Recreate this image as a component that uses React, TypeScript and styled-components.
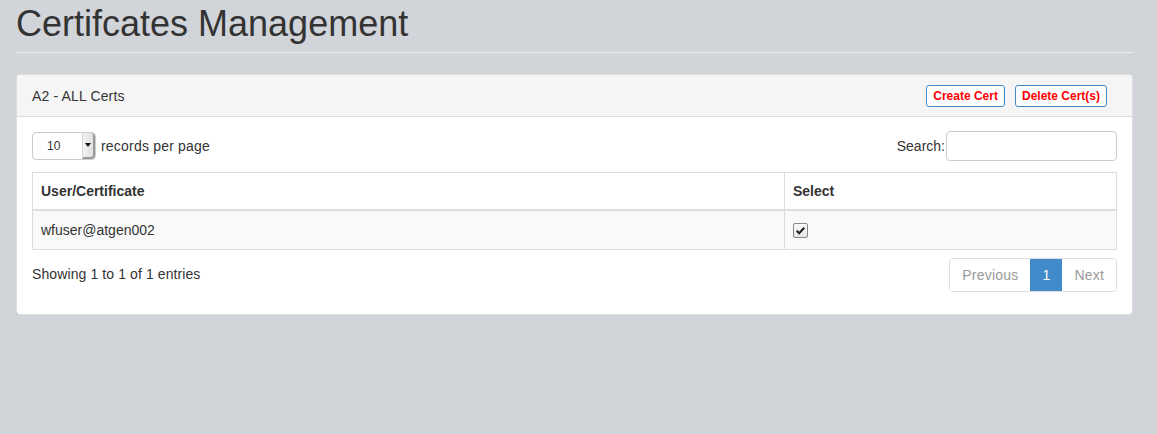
import React, {FC} from 'react';
import styled, {createGlobalStyle} from 'styled-components';

const GlobalStyle = createGlobalStyle`
  html, body {
    margin: 0;
    padding: 0;
    background: #d1d4d9;
    font-family: "Liberation Sans", Helvetica, Arial, sans-serif;
    font-size: 14px;
    color: #333;
  }
`;

const Page = styled.div`
  padding: 0 24px 0 16px;
`;

const Title = styled.h1`
  margin: 0;
  padding: 4px 0 8px;
  font-size: 36px;
  font-weight: 400;
  line-height: 40px;
  color: #333;
  border-bottom: 1px solid #eceef1;
`;

const Panel = styled.div`
  margin-top: 21px;
  background: #fff;
  border: 1px solid #dddddd;
  border-radius: 4px;
  box-shadow: 0 1px 1px rgba(0, 0, 0, 0.05);
`;

const PanelHeading = styled.div`
  display: flex;
  align-items: center;
  justify-content: space-between;
  height: 41px;
  padding: 0 25px 0 15px;
  background: #f5f5f5;
  border-bottom: 1px solid #dddddd;
  border-radius: 3px 3px 0 0;
  letter-spacing: 0.15px;
`;

const Actions = styled.div`
  display: flex;
  gap: 10px;
`;

const ActionButton = styled.button`
  font-family: "Liberation Sans", Arial, sans-serif;
  font-size: 12px;
  font-weight: 700;
  color: #ff0000;
  background: #fff;
  border: 1px solid #428bca;
  border-radius: 3px;
  height: 22px;
  padding: 0 6px;
`;

const PanelBody = styled.div`
  padding: 14px 15px 22px;
`;

const TopBar = styled.div`
  display: flex;
  align-items: center;
  justify-content: space-between;
  height: 30px;
  margin-bottom: 11px;
`;

const Length = styled.label`
  display: flex;
  align-items: center;
  gap: 5px;
  letter-spacing: 0.2px;
`;

const SelectBox = styled.div`
  position: relative;
  width: 64px;
  height: 28px;
  border: 1px solid #ccc;
  border-radius: 4px;
  background: #fff;
  font-size: 12px;
  letter-spacing: 0;
  display: flex;
  align-items: center;
  padding-left: 14px;
  box-sizing: border-box;
`;

const SelectArrow = styled.span`
  position: absolute;
  right: 0;
  top: 0;
  bottom: 0;
  width: 10px;
  background: linear-gradient(to right, #f2f2f2, #e0e0e0);
  border-left: 1px solid #d8d8d8;
  border-right: 2px solid #9a9a9a;
  border-bottom: 2px solid #9a9a9a;
  border-radius: 0 4px 4px 0;
  display: flex;
  align-items: center;
  justify-content: center;
  &::after {
    content: '';
    border-left: 3px solid transparent;
    border-right: 3px solid transparent;
    border-top: 4px solid #111;
  }
`;

const Search = styled.label`
  display: flex;
  align-items: center;
  gap: 1px;
`;

const SearchInput = styled.input`
  width: 171px;
  height: 30px;
  box-sizing: border-box;
  border: 1px solid #ccc;
  border-radius: 4px;
  padding: 4px 8px;
`;

const Table = styled.table`
  width: 100%;
  border-collapse: collapse;
  border: 1px solid #ddd;
`;

const Th = styled.th<{ $width?: number }>`
  text-align: left;
  font-weight: 700;
  padding: 8px;
  height: 37px;
  width: ${(p) => (p.$width ? `${p.$width}px` : 'auto')};
  box-sizing: border-box;
  border: 1px solid #ddd;
  border-bottom: 2px solid #ddd;
`;

const Td = styled.td<{ $striped?: boolean }>`
  padding: 8px;
  height: 40px;
  box-sizing: border-box;
  border: 1px solid #ddd;
  background: ${(p) => (p.$striped ? '#f9f9f9' : '#fff')};
`;

const Check = styled.span`
  display: inline-flex;
  align-items: center;
  justify-content: center;
  width: 13px;
  height: 13px;
  margin-top: 2px;
  border: 1px solid #888;
  border-radius: 2px;
  background: linear-gradient(#fafafa, #e6e6e6);
`;

const Footer = styled.div`
  display: flex;
  align-items: center;
  justify-content: space-between;
  margin-top: 8px;
`;

const Info = styled.span`
  letter-spacing: 0.1px;
  margin-top: -3px;
`;

const Pager = styled.div`
  display: flex;
  border: 1px solid #ddd;
  border-radius: 4px;
  overflow: hidden;
`;

const PageLink = styled.span<{ $active?: boolean }>`
  padding: 0 12px;
  height: 32px;
  line-height: 32px;
  letter-spacing: 0.2px;
  color: ${(p) => (p.$active ? '#fff' : '#999')};
  background: ${(p) => (p.$active ? '#428bca' : '#fff')};
`;

const App: FC = () => {
  return (
    <Page>
      <GlobalStyle />
      <Title>Certifcates Management</Title>
      <Panel>
        <PanelHeading>
          <span>A2 - ALL Certs</span>
          <Actions>
            <ActionButton>Create Cert</ActionButton>
            <ActionButton>Delete Cert(s)</ActionButton>
          </Actions>
        </PanelHeading>
        <PanelBody>
          <TopBar>
            <Length>
              <SelectBox>
                10
                <SelectArrow />
              </SelectBox>
              records per page
            </Length>
            <Search>
              Search:
              <SearchInput />
            </Search>
          </TopBar>
          <Table>
            <thead>
              <tr>
                <Th $width={752}>User/Certificate</Th>
                <Th>Select</Th>
              </tr>
            </thead>
            <tbody>
              <tr>
                <Td $striped>wfuser@atgen002</Td>
                <Td $striped>
                  <Check>
                    <svg width="11" height="11" viewBox="0 0 16 16">
                      <path d="M2.5 8.5 L6 12 L13.5 4" fill="none" stroke="#222" strokeWidth="3" />
                    </svg>
                  </Check>
                </Td>
              </tr>
            </tbody>
          </Table>
          <Footer>
            <Info>Showing 1 to 1 of 1 entries</Info>
            <Pager>
              <PageLink>Previous</PageLink>
              <PageLink $active>1</PageLink>
              <PageLink>Next</PageLink>
            </Pager>
          </Footer>
        </PanelBody>
      </Panel>
    </Page>
  );
};

export default App;
